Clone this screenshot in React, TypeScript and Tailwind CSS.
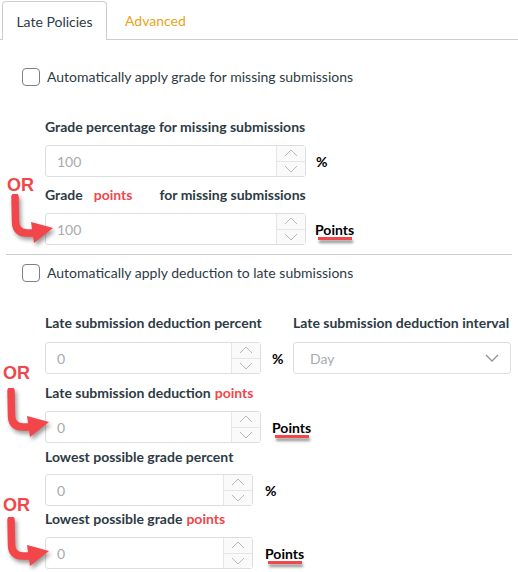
import React from "react";

const RED = "#f2464b";

function Chevron({ dir }: { dir: "up" | "down" }) {
  return (
    <svg width="14" height="8" viewBox="0 0 14 8" fill="none">
      {dir === "up" ? (
        <path d="M1 7 L7 1 L13 7" stroke="#b4b9bd" strokeWidth="1" />
      ) : (
        <path d="M1 1 L7 7 L13 1" stroke="#b4b9bd" strokeWidth="1" />
      )}
    </svg>
  );
}

function NumberInput({ value, width }: { value: string; width: string }) {
  return (
    <div className={`flex h-[32px] ${width} rounded-[3px] border border-[#dcdfe2] bg-white`}>
      <div className="flex flex-1 items-center pl-[11px] text-[14px] text-[#a7abae]">{value}</div>
      <div className="flex w-[29px] flex-col border-l border-[#e4e6e8] bg-[#fafafa]">
        <div className="flex flex-1 items-center justify-center border-b border-[#e4e6e8]">
          <Chevron dir="up" />
        </div>
        <div className="flex flex-1 items-center justify-center">
          <Chevron dir="down" />
        </div>
      </div>
    </div>
  );
}

function PointsUnit({ className }: { className: string }) {
  return (
    <div className={`relative text-[14px] font-bold text-black ${className}`}>
      Points
      <div className="absolute left-[3px] right-[2px] top-[18px] h-[3px] bg-[#f2464b] shadow-[1px_3px_3px_rgba(0,0,0,0.45)]" />
    </div>
  );
}

function Arrow({ left, top }: { left: number; top: number }) {
  return (
    <svg
      className="absolute"
      style={{ left, top, filter: "drop-shadow(2px 3px 2px rgba(0,0,0,0.4))" }}
      width="60"
      height="56"
      viewBox="0 0 60 56"
    >
      <path d="M4 3 L4.5 28 Q5 39 16 39 L24 39" stroke={RED} strokeWidth="7.5" strokeLinecap="round" fill="none" />
      <polygon points="20,28 42,34 23,49" fill={RED} />
    </svg>
  );
}

function OrLabel({ left, top }: { left: number; top: number }) {
  return (
    <div
      className="absolute text-[18px] font-bold leading-none text-[#f2464b]"
      style={{ left, top, fontFamily: '"Liberation Sans", Arial, sans-serif' }}
    >
      OR
    </div>
  );
}

function Checkbox({ label }: { label: string }) {
  return (
    <div className="flex h-[18px] items-center pl-[22px]">
      <div className="h-[18px] w-[18px] rounded-[4px] border border-[#7b8186] bg-white" />
      <span className="ml-[7px] text-[14px] leading-[18px] text-[#2d3b45]">{label}</span>
    </div>
  );
}

function Label({ children, className = "" }: { children: React.ReactNode; className?: string }) {
  return (
    <div className={`flex h-[18px] items-center text-[14px] font-bold leading-[18px] text-[#2d3b45] ${className}`}>{children}</div>
  );
}

export default function App() {
  return (
    <div className="relative h-[572px] w-[518px] overflow-hidden bg-white" style={{ fontFamily: "Lato, 'Noto Sans', sans-serif" }}>
      {/* Tabs */}
      <div className="flex h-[40px] items-end pt-[2px]">
        <div className="h-[2px] w-[2px] border-b border-[#c7cdd1]" />
        <div className="flex h-[39px] w-[105px] items-center justify-center rounded-t-[4px] border border-b-0 border-[#c7cdd1] bg-white text-[14px] text-[#2d3b45]">
          Late Policies
        </div>
        <div className="flex h-[39px] flex-1 items-center border-b border-[#c7cdd1] pl-[18px] text-[14px] text-[#eaa319]">
          Advanced
        </div>
      </div>

      <div className="mt-[28px]">
        <Checkbox label="Automatically apply grade for missing submissions" />
      </div>

      <div className="mt-[32px] pl-[45px]">
        <Label>Grade percentage for missing submissions</Label>
        <div className="mt-[9px] flex items-center">
          <NumberInput value="100" width="w-[261px]" />
          <span className="ml-[10px] text-[14px] font-bold text-black">%</span>
        </div>
        <Label className="mt-[9px]">
          <span>Grade</span>
          <span className="ml-[11px] text-[#f2464b]">points</span>
          <span className="ml-[27px]">for missing submissions</span>
        </Label>
        <div className="mt-[9px] flex items-center">
          <NumberInput value="100" width="w-[261px]" />
          <PointsUnit className="ml-[9px]" />
        </div>
      </div>

      <div className="mx-[6px] mt-[9px] border-t border-[#c7cdd1]" />

      <div className="mt-[9px]">
        <Checkbox label="Automatically apply deduction to late submissions" />
      </div>

      <div className="mt-[32px] pl-[45px]">
        <div className="flex">
          <div className="w-[248px]">
            <Label>Late submission deduction percent</Label>
            <div className="mt-[10px] flex items-center">
              <NumberInput value="0" width="w-[216px]" />
              <span className="ml-[11px] text-[14px] font-bold text-black">%</span>
            </div>
          </div>
          <div className="w-[218px]">
            <Label>Late submission deduction interval</Label>
            <div className="mt-[10px] flex h-[32px] items-center justify-between rounded-[3px] border border-[#dcdfe2] bg-white pl-[16px] pr-[11px] text-[14px] text-[#a7abae]">
              <span>Day</span>
              <svg width="14" height="8" viewBox="0 0 14 8" fill="none">
                <path d="M1 1 L7 7 L13 1" stroke="#8f969c" strokeWidth="1.3" />
              </svg>
            </div>
          </div>
        </div>
        <Label className="mt-[10px]">
          <span>Late submission deduction</span>
          <span className="ml-[4px] text-[#f2464b]">points</span>
        </Label>
        <div className="mt-[9px] flex items-center">
          <NumberInput value="0" width="w-[216px]" />
          <PointsUnit className="ml-[11px]" />
        </div>
        <Label className="mt-[5px]">Lowest possible grade percent</Label>
        <div className="mt-[8px] flex items-center">
          <NumberInput value="0" width="w-[208px]" />
          <span className="ml-[12px] text-[14px] font-bold text-black">%</span>
        </div>
        <Label className="mt-[4px]">
          <span>Lowest possible grade</span>
          <span className="ml-[4px] text-[#f2464b]">points</span>
        </Label>
        <div className="mt-[9px] flex items-center">
          <NumberInput value="0" width="w-[208px]" />
          <PointsUnit className="ml-[12px]" />
        </div>
      </div>

      {/* Annotations */}
      <OrLabel left={7} top={176} />
      <Arrow left={11} top={194} />
      <OrLabel left={3} top={364} />
      <Arrow left={7} top={388} />
      <OrLabel left={3} top={496} />
      <Arrow left={7} top={517} />
    </div>
  );
}
